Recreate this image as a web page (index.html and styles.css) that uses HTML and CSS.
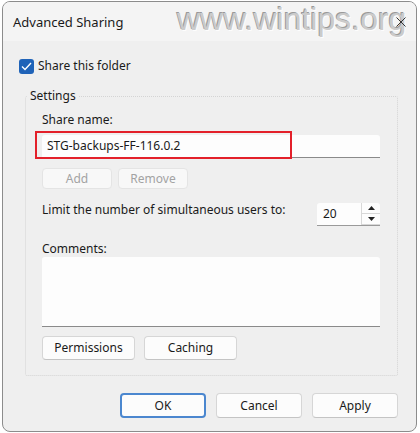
FILE: index.html
```html
<!DOCTYPE html>
<html>
<head>
<meta charset="UTF-8" />
<title>Advanced Sharing</title>
<link rel="stylesheet" href="styles.css">
</head>
<body>
<div class="window">
	<div class="titlebar">
		<span class="title">Advanced Sharing</span>
		<span class="watermark">www.wintips.org</span>
		<svg class="close" width="10" height="10" viewBox="0 0 10 10"><path d="M0.5 0.5L9.5 9.5M9.5 0.5L0.5 9.5" stroke="#333" stroke-width="1" fill="none"/></svg>
	</div>
	<div class="content">
		<label class="check-row">
			<span class="checkbox"><svg width="11" height="9" viewBox="0 0 11 9"><path d="M1 4.5L4 7.5L10 1" stroke="#fff" stroke-width="1.4" fill="none"/></svg></span>
			<span>Share this folder</span>
		</label>
		<fieldset class="group">
			<legend>Settings</legend>
			<div class="label">Share name:</div>
			<div class="name-field">
				<div class="textbox">STG-backups-FF-116.0.2</div>
				<div class="highlight"></div>
			</div>
			<div class="btn-row small">
				<span class="btn disabled">Add</span>
				<span class="btn disabled">Remove</span>
			</div>
			<div class="limit-row">
				<span>Limit the number of simultaneous users to:</span>
				<div class="spin">
					<span class="spin-value">20</span>
					<span class="spin-arrows">
						<span class="arrow"><svg width="7" height="4" viewBox="0 0 7 4"><path d="M3.5 0L7 4H0Z" fill="#222"/></svg></span>
						<span class="arrow"><svg width="7" height="4" viewBox="0 0 7 4"><path d="M0 0H7L3.5 4Z" fill="#222"/></svg></span>
					</span>
				</div>
			</div>
			<div class="label comments-label">Comments:</div>
			<div class="textarea"></div>
			<div class="btn-row wide">
				<span class="btn">Permissions</span>
				<span class="btn">Caching</span>
			</div>
		</fieldset>
		<div class="actions">
			<span class="btn default">OK</span>
			<span class="btn">Cancel</span>
			<span class="btn">Apply</span>
		</div>
	</div>
</div>
</body>
</html>
```
FILE: styles.css
```css
body{margin:0;background:#fff;font-family:"Noto Sans","Open Sans",sans-serif;font-size:12px;color:#1a1a1a;}
.window{margin:1px 0 0 2px;width:413px;height:429px;border:1px solid #8c8c8c;border-radius:8px;background:#efefef;overflow:hidden;display:flex;flex-direction:column;}
.titlebar{position:relative;height:39px;background:#f4f4f4;display:flex;align-items:center;padding:0 0 0 10px;}
.title{font-size:13px;line-height:16px;}
.watermark{position:absolute;left:174px;top:-1px;font-family:"Liberation Sans",sans-serif;font-size:32px;color:#cbcbcb;text-shadow:-1px -1px 0 #9a9a9a,1px 1px 0 #fdfdfd;}
.close{position:absolute;left:393px;top:15px;}
.content{padding:17px 18px 0 16px;display:flex;flex-direction:column;}
.check-row{display:flex;align-items:center;line-height:16px;}
.checkbox{width:15px;height:15px;border-radius:3px;background:#1f63b8;display:flex;align-items:center;justify-content:center;margin-right:4px;}
.group{margin:14px 0 0 6px;border:1px dotted #d4d4d4;border-radius:2px;padding:8px 17px 15px 16px;}
.group legend{margin-left:-15px;padding:0 3px;line-height:16px;}
.label{line-height:16px;}
.name-field{position:relative;margin-top:7px;}
.textbox{height:22px;line-height:22px;padding-left:5px;background:#fdfdfd;border-bottom:1px solid #8a8a8a;border-radius:3px 3px 0 0;}
.highlight{position:absolute;left:-7px;top:-4px;width:253px;height:24px;border:2px solid #e3202a;}
.btn-row{display:flex;gap:6px;margin-top:10px;}
.btn{display:flex;align-items:center;justify-content:center;box-sizing:border-box;background:#fcfcfc;border:1px solid #d6d6d6;border-bottom-color:#c4c4c4;border-radius:4px;line-height:16px;}
.small .btn{width:70px;height:21px;}
.btn.disabled{color:#a3a3a3;background:#f8f8f8;border-color:#e4e4e4;}
.limit-row{display:flex;justify-content:space-between;align-items:flex-start;margin-top:13px;line-height:16px;}
.spin{display:flex;width:63px;height:22px;margin-top:1px;background:#fdfdfd;border-bottom:1px solid #9a9a9a;border-radius:3px 3px 0 0;}
.spin-value{flex:1;padding-left:6px;line-height:22px;}
.spin-arrows{width:18px;display:flex;flex-direction:column;border-left:1px solid #d8d8d8;}
.arrow{flex:1;display:flex;align-items:center;justify-content:center;border-bottom:1px solid #d8d8d8;}
.comments-label{margin-top:15px;}
.textarea{height:69px;background:#fdfdfd;border-bottom:1px solid #8a8a8a;border-radius:3px 3px 0 0;}
.wide{gap:9px;margin-top:9px;}
.wide .btn{width:93px;height:24px;}
.actions{display:flex;justify-content:flex-end;gap:10px;margin-top:17px;}
.actions .btn{width:86px;height:25px;}
.btn.default{border:2px solid #4b87cf;}
```
